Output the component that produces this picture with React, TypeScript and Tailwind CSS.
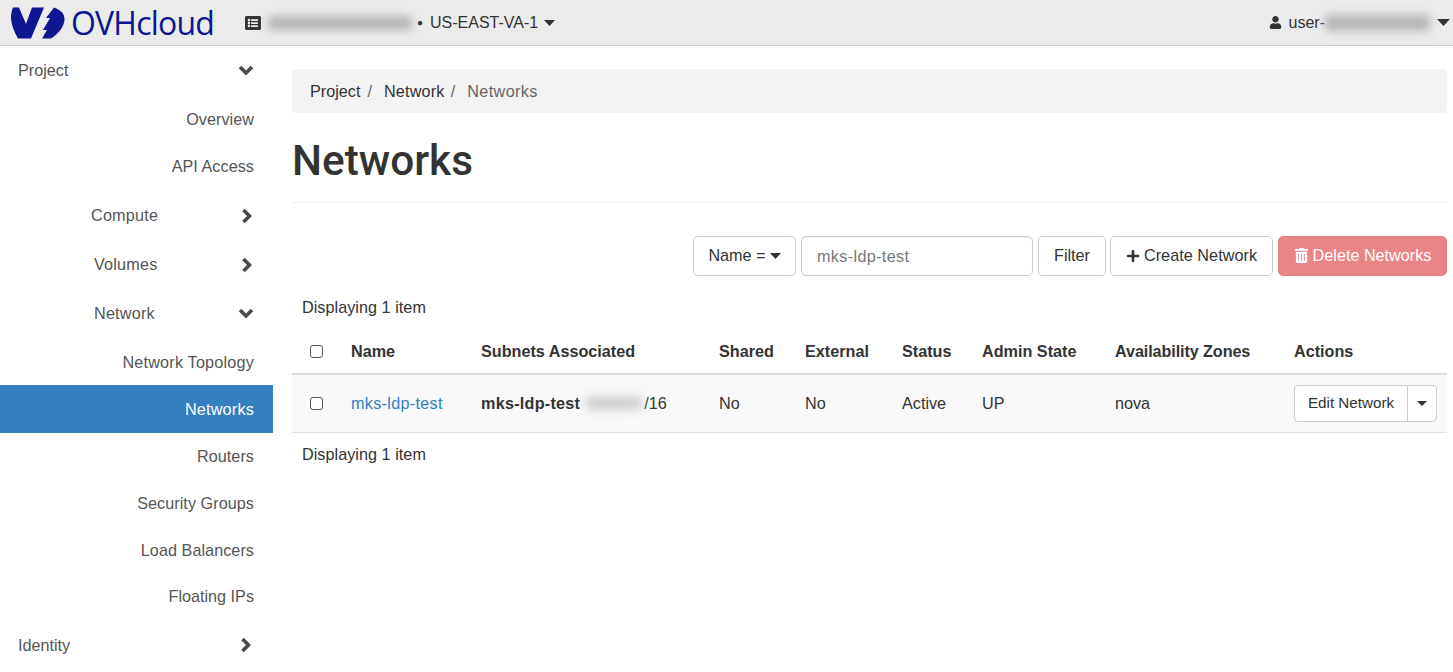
import React from "react";
import { FaUser, FaPlus, FaTrashAlt, FaListAlt } from "react-icons/fa";

const font = "font-['Liberation_Sans',Arial,sans-serif]";

function Logo() {
  return (
    <svg width="54" height="32" viewBox="0 0 54 32" className="shrink-0">
      <path fill="#0f1691" d="M2 0.500H8L15 17L21 0.500H33L20 31.500H7C3 24 0 17 0 10C0 6 1 3 2 0.500Z" />
      <path fill="#0f1691" d="M43 0.500C50 3 53.500 7 53.500 12C53.500 20 47 27 40 31.500H31L36 23H32L39 11H35Z" />
    </svg>
  );
}

function Caret({ w = 11, h = 6, className = "" }: { w?: number; h?: number; className?: string }) {
  return (
    <svg width={w} height={h} viewBox="0 0 11 6" preserveAspectRatio="none" className={`shrink-0 ${className}`}>
      <path d="M0 0H11L5.500 6Z" fill="currentColor" />
    </svg>
  );
}

function ChevDown() {
  return (
    <svg width="16" height="11" viewBox="0 0 16 11" className="shrink-0 text-[#4a4a4a]">
      <path d="M2 2L8 8L14 2" fill="none" stroke="currentColor" strokeWidth="3.6" />
    </svg>
  );
}

function ChevRight() {
  return (
    <svg width="11" height="16" viewBox="0 0 11 16" className="shrink-0 text-[#4a4a4a]">
      <path d="M2.500 2L8.500 8L2.500 14" fill="none" stroke="currentColor" strokeWidth="3.6" />
    </svg>
  );
}

function Blur({ w, h = 14, className = "" }: { w: number; h?: number; className?: string }) {
  return <span style={{ width: w, height: h }} className={`inline-block bg-[#b5b5b5] blur-[5px] rounded ${className}`} />;
}

function SideRow({ label, active = false, h = "h-[47px]", track = "tracking-[0.05px]" }: { label: string; active?: boolean; h?: string; track?: string }) {
  return (
    <div className={`${h} ${track} flex items-center justify-end pr-[19px] ${active ? "bg-[#337fc0] text-white" : "text-[#555]"}`}>
      {label}
    </div>
  );
}

function SideGroup({ label, open, ml }: { label: string; open: boolean; ml: string }) {
  return (
    <div className="h-[49px] flex items-center text-[#555]">
      <span className={`${ml} tracking-[0.2px]`}>{label}</span>
      <span className="ml-auto mr-[19px] w-[16px] flex justify-center">
        {open ? <ChevDown /> : <ChevRight />}
      </span>
    </div>
  );
}

function Th({ w, children, track = "" }: { w: string; children?: React.ReactNode; track?: string }) {
  return <div className={`${w} ${track} shrink-0 font-bold text-[#333]`}>{children}</div>;
}

function Check() {
  return <span className="block w-[13px] h-[13px] rounded-[3px] border border-[#555] bg-white" />;
}

export default function App() {
  return (
    <div className={`${font} w-[1453px] h-[672px] overflow-hidden bg-white text-[16.2px] text-[#333] flex flex-col`}>
      <header className="h-[46px] shrink-0 bg-[#ebebeb] border-b border-[#d0d0d0] flex items-center pl-[11px] pr-[3px] text-[16px]">
        <Logo />
        <span className="ml-[6px] text-[#0f1691] text-[32px] leading-none tracking-[-0.8px] w-[144px] font-['Open_Sans',sans-serif]">OVHcloud</span>
        <span className="ml-[30px] text-[#333] flex items-center"><FaListAlt size={16} /></span>
        <Blur w={144} className="ml-[7px]" />
        <span className="ml-[5px] mr-[7px] text-[10px]">●</span>
        <span>US-EAST-VA-1</span>
        <Caret className="ml-[6px]" />
        <span className="ml-auto flex items-center">
          <FaUser size={13} className="mr-[7px]" />
          <span>user-</span>
          <Blur w={105} h={16} />
          <Caret className="ml-[7px]" w={13} h={7} />
        </span>
      </header>
      <div className="flex flex-1 min-h-0">
        <aside className="w-[273px] shrink-0">
          <div className="h-[49px] pb-[1px] flex items-center text-[#555] pl-[18px] pr-[19px] justify-between">
            <span>Project</span>
            <ChevDown />
          </div>
          <SideRow label="Overview" h="h-[48px]" />
          <SideRow label="API Access" h="h-[48px] pb-[2px]" />
          <SideGroup label="Compute" open={false} ml="ml-[91px]" />
          <SideGroup label="Volumes" open={false} ml="ml-[94px]" />
          <SideGroup label="Network" open ml="ml-[94px]" />
          <SideRow label="Network Topology" h="h-[47px] pt-[1px]" track="tracking-[0.2px]" />
          <SideRow label="Networks" active h="h-[48px]" track="tracking-[0.2px]" />
          <SideRow label="Routers" />
          <SideRow label="Security Groups" />
          <SideRow label="Load Balancers" />
          <SideRow label="Floating IPs" h="h-[46px] pb-[2px]" track="" />
          <div className="h-[49px] pt-[1px] flex items-center text-[#555] pl-[18px] pr-[22px] justify-between">
            <span>Identity</span>
            <ChevRight />
          </div>
        </aside>
        <main className="flex-1 min-w-0 pl-[19px] pr-[6px] pt-[23px]">
          <nav className="h-[44px] rounded-[4px] bg-[#f3f3f3] flex items-center px-[18px]">
            <span>Project</span><span className="text-[#666] ml-[7px] mr-[12px]">/</span>
            <span className="tracking-[0.2px]">Network</span><span className="text-[#666] ml-[6px] mr-[12px]">/</span>
            <span className="text-[#666] tracking-[0.4px]">Networks</span>
          </nav>
          <h1 className="mt-[24px] text-[42.300px] leading-[48px] font-medium text-[#333] pb-[17px] border-b border-[#eee] font-['Roboto',sans-serif]">Networks</h1>
          <div className="mt-[33px] flex justify-end h-[40px]">
            <button className="w-[103px] pb-[1px] rounded-[5px] border border-[#ccc] flex items-center justify-center">Name =<Caret className="ml-[4px]" /></button>
            <input readOnly placeholder="mks-ldp-test" className="ml-[5px] w-[232px] rounded-[5px] border border-[#ccc] px-[15px] outline-none tracking-[0.35px] shadow-[inset_0_1px_1px_rgba(0,0,0,0.075)] placeholder:text-[#777]" />
            <button className="ml-[5px] w-[68px] pb-[1px] rounded-[5px] border border-[#ccc]">Filter</button>
            <button className="ml-[4px] w-[163px] pb-[1px] rounded-[5px] border border-[#ccc] flex items-center justify-center tracking-[0.05px]"><FaPlus size={14} className="mr-[4px]" />Create Network</button>
            <button className="ml-[5px] w-[169px] pb-[1px] rounded-[5px] bg-[#e98585] border border-[#e58080] text-white flex items-center justify-center"><FaTrashAlt size={15} className="mr-[4px]" />Delete Networks</button>
          </div>
          <div className="mt-[21px] pl-[10px] h-[20px] leading-[20px] tracking-[0.04px]">Displaying 1 item</div>
          <div className="mt-[14px] h-[44px] pb-[2px] flex items-center border-b-2 border-[#ddd]">
            <div className="w-[59px] pl-[18px] shrink-0"><Check /></div>
            <Th w="w-[130px]">Name</Th>
            <Th w="w-[238px]">Subnets Associated</Th>
            <Th w="w-[86px]">Shared</Th>
            <Th w="w-[97px]">External</Th>
            <Th w="w-[80px]">Status</Th>
            <Th w="w-[133px]">Admin State</Th>
            <Th w="w-[179px]" track="tracking-[-0.1px]">Availability Zones</Th>
            <Th w="w-[100px]">Actions</Th>
          </div>
          <div className="h-[58px] flex items-center bg-[#f9f9f9] border-b border-[#ddd]">
            <div className="w-[59px] pl-[18px] shrink-0"><Check /></div>
            <div className="w-[130px] shrink-0 text-[#337fc0] tracking-[0.3px]">mks-ldp-test</div>
            <div className="w-[238px] shrink-0 flex items-center">
              <b className="tracking-[0.25px]">mks-ldp-test</b>
              <Blur w={56} className="ml-[6px] mr-[2px] bg-[#cfcfcf]" />
              <span>/16</span>
            </div>
            <div className="w-[86px] shrink-0">No</div>
            <div className="w-[97px] shrink-0">No</div>
            <div className="w-[80px] shrink-0">Active</div>
            <div className="w-[133px] shrink-0">UP</div>
            <div className="w-[179px] shrink-0">nova</div>
            <div className="flex h-[37px] w-[143px] rounded-[4px] border border-[#ccc] bg-white text-[15.200px]">
              <span className="w-[113px] flex items-center justify-center border-r border-[#ccc]">Edit Network</span>
              <span className="flex-1 flex items-center justify-center"><Caret w={10} h={5} /></span>
            </div>
          </div>
          <div className="mt-[11px] pl-[10px] h-[20px] leading-[20px] tracking-[0.04px]">Displaying 1 item</div>
        </main>
      </div>
    </div>
  );
}
